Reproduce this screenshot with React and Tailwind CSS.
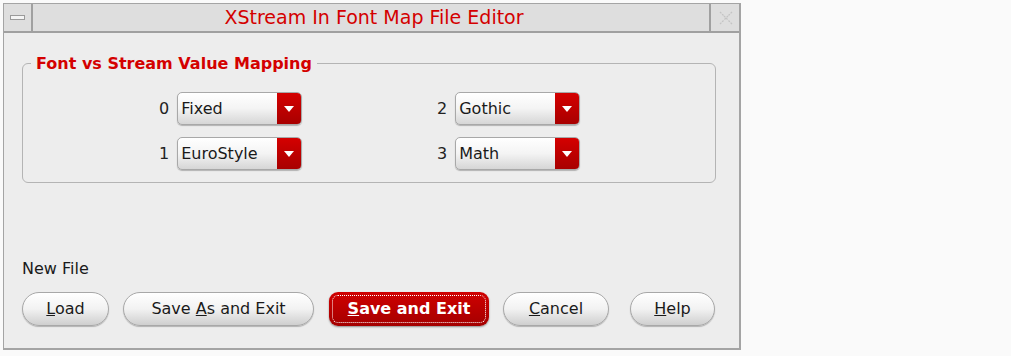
import React from 'react';

const font = { fontFamily: '"DejaVu Sans", "Liberation Sans", sans-serif' };

function Dropdown({ label }) {
  return (
    <div className="flex h-[33px] w-[125px] overflow-hidden rounded-[5px] border border-[#a8a8a8] bg-gradient-to-b from-[#ffffff] via-[#f4f4f4] to-[#d6d6d6] shadow-[0_1px_1px_rgba(0,0,0,0.25)]">
      <div className="flex flex-1 items-center pl-[3px] text-[16px] text-[#1a1a1a]">{label}</div>
      <div className="flex w-[24px] items-center justify-center bg-gradient-to-b from-[#d40000] to-[#a80000]">
        <svg width="10" height="6" viewBox="0 0 10 6">
          <polygon points="0,0 10,0 5,6" fill="#ffffff" />
        </svg>
      </div>
    </div>
  );
}

function Row({ n, label }) {
  return (
    <div className="flex items-center gap-[8px]">
      <span className="text-[16px] text-[#222]">{n}</span>
      <Dropdown label={label} />
    </div>
  );
}

function Btn({ w, children, primary }) {
  if (primary) {
    return (
      <div className={`${w} flex h-[34px] items-center justify-center rounded-[9px] bg-gradient-to-b from-[#d00000] to-[#a40000] p-[3px] shadow-[0_1px_2px_rgba(0,0,0,0.4)]`}>
        <div className="flex h-full w-full items-center justify-center rounded-[6px] border border-dotted border-white text-[16px] font-bold text-white">
          {children}
        </div>
      </div>
    );
  }
  return (
    <div className={`${w} flex h-[34px] items-center justify-center rounded-full border border-[#a8a8a8] bg-gradient-to-b from-[#ffffff] via-[#f2f2f2] to-[#cfcfcf] text-[16px] text-[#1a1a1a] shadow-[0_1px_1px_rgba(0,0,0,0.25)]`}>
      {children}
    </div>
  );
}

export default function App() {
  return (
    <div className="h-[356px] w-[1011px] bg-[#fafafa] pl-[3px] pt-[3px]" style={font}>
      <div className="flex h-[347px] w-[738px] flex-col border-2 border-l border-t border-[#a4a4a4] bg-[#ededed]">
        {/* title bar */}
        <div className="flex h-[29px] gap-[2px] border-b-2 border-[#a0a0a0] bg-[#dedede]">
          <div className="flex w-[29px] items-center justify-center border-r-2 border-[#a0a0a0]">
            <div className="h-[5px] w-[15px] border border-[#9a9a9a] bg-[#f4f4f4]"></div>
          </div>
          <div className="flex flex-1 items-center justify-center border-r-2 border-[#a0a0a0] pl-[4px] text-[19px] text-[#d40000]">
            XStream In Font Map File Editor
          </div>
          <div className="flex w-[26px] items-center justify-center">
            <svg width="16" height="16" viewBox="0 0 16 16" fill="none" stroke="#c4c4c4" strokeWidth="1.3" strokeDasharray="2 1">
              <path d="M2 2 L6 6 M14 2 L10 6 M2 14 L6 10 M14 14 L10 10 M6 6 L10 10 M10 6 L6 10" />
            </svg>
          </div>
        </div>

        <div className="flex flex-1 flex-col px-[18px]">
          {/* group box */}
          <div className="relative mt-[30px] mr-[5px] h-[120px] rounded-[6px] border border-[#b4b4b4]">
            <span className="absolute left-[8px] top-[-12px] bg-[#ededed] px-[5px] text-[16px] font-bold text-[#d40000]">
              Font vs Stream Value Mapping
            </span>
            <div className="ml-[136px] mt-[28px] grid w-[556px] grid-cols-2 gap-y-[12px]">
              <Row n="0" label="Fixed" />
              <Row n="2" label="Gothic" />
              <Row n="1" label="EuroStyle" />
              <Row n="3" label="Math" />
            </div>
          </div>

          <div className="mt-[74px] text-[16px] text-[#1a1a1a]">New File</div>

          <div className="mt-[11px] flex items-center">
            <Btn w="w-[87px]"><span><u>L</u>oad</span></Btn>
            <div className="w-[14px]"></div>
            <Btn w="w-[191px]"><span>Save <u>A</u>s and Exit</span></Btn>
            <div className="w-[15px]"></div>
            <Btn w="w-[160px]" primary><span><u>S</u>ave and Exit</span></Btn>
            <div className="w-[14px]"></div>
            <Btn w="w-[106px]"><span><u>C</u>ancel</span></Btn>
            <div className="w-[21px]"></div>
            <Btn w="w-[85px]"><span><u>H</u>elp</span></Btn>
          </div>
        </div>
      </div>
    </div>
  );
}
